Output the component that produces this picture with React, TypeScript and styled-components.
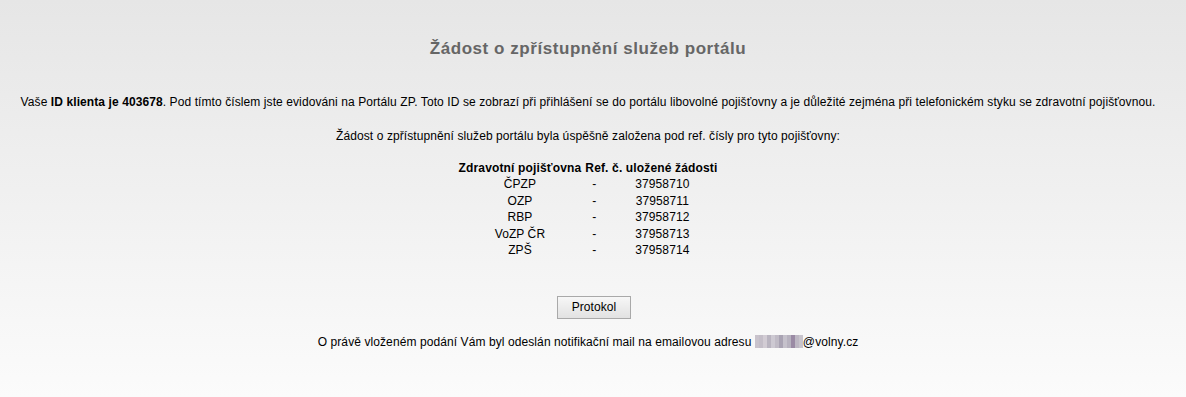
import { FC } from 'react';
import styled, { createGlobalStyle } from 'styled-components';

const GlobalStyle = createGlobalStyle`
  html, body {
    margin: 0;
    padding: 0;
  }
  body {
    font-family: 'Liberation Sans', Arial, sans-serif;
    font-size: 12px;
    letter-spacing: 0.09px;
    color: #000;
  }
`;

const Page = styled.div`
  min-height: 397px;
  box-sizing: border-box;
  background: linear-gradient(to bottom, #e6e6e6 0%, #fbfbfb 100%);
  padding: 39px 10px 0 0;
  text-align: center;
`;

const Title = styled.h1`
  margin: 0;
  font-size: 17px;
  line-height: 20px;
  letter-spacing: 0.55px;
  font-weight: bold;
  color: #666666;
`;

const Paragraph = styled.p<{ $top: number }>`
  margin: ${(p) => p.$top}px 0 0;
  line-height: 14px;
`;

const Table = styled.table`
  margin: 17px auto 0;
  border-collapse: collapse;

  th {
    font-weight: bold;
    padding: 0 2px;
    letter-spacing: 0.15px;
    line-height: 16px;
  }

  td {
    padding: 0;
    line-height: 16.5px;
  }
`;

const DashCell = styled.td`
  width: 22px;
`;

const ButtonRow = styled.div`
  margin-top: 37px;
  padding-left: 12px;
`;

const Button = styled.button`
  width: 74px;
  height: 23px;
  border: 1px solid #a9a9a9;
  border-radius: 0;
  background: linear-gradient(to bottom, #f7f7f7 0%, #ececec 50%, #e2e2e2 100%);
  font-family: 'Liberation Sans', Arial, sans-serif;
  font-size: 12px;
  letter-spacing: 0.09px;
  color: #000;
  padding: 0;
  vertical-align: top;
`;

const Blur = styled.span`
  display: inline-flex;
  vertical-align: -2px;
  height: 13px;
`;

const BlurCell = styled.span<{ $c: string }>`
  display: inline-block;
  width: 4px;
  height: 13px;
  background: ${(p) => p.$c};
`;

const insurers = [
  { name: 'ČPZP', ref: '37958710' },
  { name: 'OZP', ref: '37958711' },
  { name: 'RBP', ref: '37958712' },
  { name: 'VoZP ČR', ref: '37958713' },
  { name: 'ZPŠ', ref: '37958714' },
];

const blurColors = [
  '#c9c3cc', '#c4bec8', '#d2ccd4', '#b9b4c0', '#cdc9d2', '#c0bbc6',
  '#a9a3b3', '#c5c1cb', '#b7b2bf', '#9a8aa4', '#bdb7c3', '#c8c4cc',
];

const App: FC = () => (
  <>
    <GlobalStyle />
    <Page>
      <Title>Žádost o zpřístupnění služeb portálu</Title>
      <Paragraph $top={36}>
        Vaše <b>ID klienta je 403678</b>. Pod tímto číslem jste evidováni na Portálu ZP. Toto ID se
        zobrazí při přihlášení se do portálu libovolné pojišťovny a je důležité zejména při
        telefonickém styku se zdravotní pojišťovnou.
      </Paragraph>
      <Paragraph $top={20}>
        Žádost o zpřístupnění služeb portálu byla úspěšně založena pod ref. čísly pro tyto
        pojišťovny:
      </Paragraph>
      <Table>
        <thead>
          <tr>
            <th>Zdravotní pojišťovna</th>
            <th colSpan={2}>Ref. č. uložené žádosti</th>
          </tr>
        </thead>
        <tbody>
          {insurers.map((i) => (
            <tr key={i.ref}>
              <td>{i.name}</td>
              <DashCell>-</DashCell>
              <td>{i.ref}</td>
            </tr>
          ))}
        </tbody>
      </Table>
      <ButtonRow>
        <Button>Protokol</Button>
      </ButtonRow>
      <Paragraph $top={16}>
        O právě vloženém podání Vám byl odeslán notifikační mail na emailovou adresu{' '}
        <Blur>
          {blurColors.map((c, idx) => (
            <BlurCell key={idx} $c={c} />
          ))}
        </Blur>
        @volny.cz
      </Paragraph>
    </Page>
  </>
);

export default App;
